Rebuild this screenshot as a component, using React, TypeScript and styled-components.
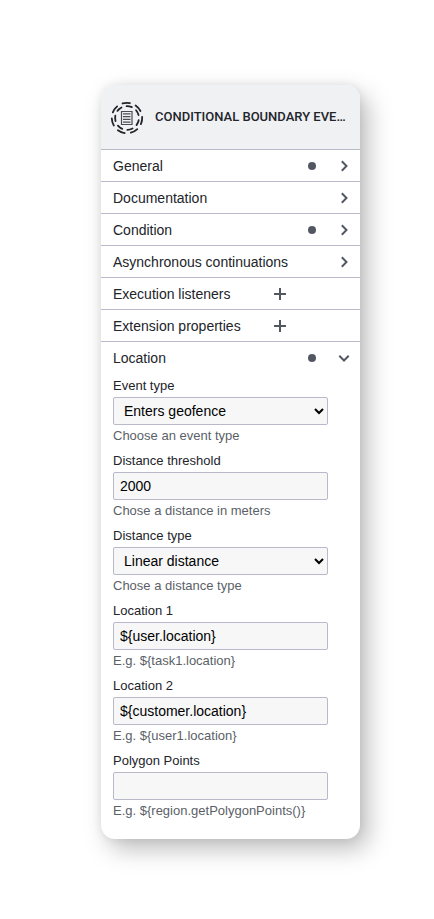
import React, { useId, useState } from "react";
import styled, { createGlobalStyle } from "styled-components";

const GlobalStyle = createGlobalStyle`
  *, *::before, *::after { box-sizing: border-box; }
  body {
    margin: 0;
    background: #ffffff;
    color: #22242a;
    font-family: "Liberation Sans", Arial, sans-serif;
    font-size: 14px;
  }
`;

const Page = styled.main`
  padding: 85px 74px 80px 101px;
`;

const Panel = styled.section`
  border-radius: 14px;
  background: #ffffff;
  box-shadow: 8px 10px 24px rgba(0, 0, 0, 0.26), 0 0 10px rgba(0, 0, 0, 0.08);
`;

const Header = styled.header`
  display: flex;
  align-items: center;
  gap: 11px;
  height: 65px;
  padding: 0 9px;
  border-bottom: 1px solid #b9bac9;
  border-radius: 14px 14px 0 0;
  background: #f0f1f3;
`;

const Title = styled.h1`
  flex: 1;
  min-width: 0;
  margin: 0;
  overflow: hidden;
  white-space: nowrap;
  text-overflow: ellipsis;
  font-family: Roboto, sans-serif;
  font-size: 13px;
  font-weight: 500;
  line-height: 20px;
`;

const GroupHeader = styled.button<{ $open?: boolean }>`
  display: flex;
  align-items: center;
  width: 100%;
  height: 32px;
  padding: 0 8px 0 12px;
  border: 0;
  border-bottom: ${(p) => (p.$open ? "0" : "1px solid #b9bac9")};
  background: transparent;
  color: inherit;
  font: inherit;
  text-align: left;
  cursor: pointer;
`;

const GroupTitle = styled.span`
  flex: 1;
  white-space: nowrap;
`;

const Dot = styled.span`
  width: 8px;
  height: 8px;
  margin-right: 20px;
  border-radius: 50%;
  background: #525762;
`;

const Icon = styled.svg<{ $push?: boolean }>`
  flex: none;
  width: 16px;
  height: 16px;
  margin-right: ${(p) => (p.$push ? "64px" : "0")};
  fill: none;
  stroke: #525762;
  stroke-width: 2;
`;

const Fields = styled.div`
  padding: 2px 32px 13px 12px;
`;

const Field = styled.div`
  display: flex;
  flex-direction: column;
  height: 75px;
  font-size: 13px;
`;

const Label = styled.label`
  line-height: 20px;
  margin-bottom: 1px;
`;

const Control = styled.input`
  width: 100%;
  height: 28px;
  margin-bottom: 1px;
  padding: 3px 6px;
  border: 1px solid #b9bac9;
  border-radius: 2px;
  background: #f7f7f8;
  color: #000000;
  font: inherit;
  font-size: 14px;
`;

const Hint = styled.span`
  color: #5b5f68;
  line-height: 20px;
  white-space: nowrap;
`;

const polar = (radius: number, degrees: number) => {
  const a = (degrees * Math.PI) / 180;
  return `${(17 + radius * Math.cos(a)).toFixed(2)} ${(19 + radius * Math.sin(a)).toFixed(2)}`;
};

const dash = (radius: number, middle: number, spread: number) =>
  `M${polar(radius, middle - spread)}A${radius} ${radius} 0 0 1 ${polar(radius, middle + spread)}`;

const ConditionalEventIcon = () => (
  <svg width="34" height="36" viewBox="0 0 34 36" fill="none" stroke="#22242a" aria-hidden="true">
    {Array.from({ length: 7 }, (_, i) => (
      <g key={i} strokeWidth="1.8" strokeLinecap="round">
        <path d={dash(15.2, -93 + (i * 360) / 7, 14)} />
        <path d={dash(11.9, -79 + (i * 360) / 7, 13)} />
      </g>
    ))}
    <path d="M11.5 12.5h10.5v13h-10.5z" stroke="#4a4c52" strokeWidth="1.2" />
    <path d="M13 14.8h7.5M13 17.6h7.5M13 20.4h7.5M13 23.2h7.5" stroke="#4a4c52" strokeWidth="1.2" />
  </svg>
);

type GroupProps = { title: string; filled?: boolean; list?: boolean; open?: boolean; onClick?: () => void };

const Group = ({ title, filled, list, open, onClick }: GroupProps) => (
  <GroupHeader type="button" $open={open} aria-expanded={list ? undefined : !!open} onClick={onClick}>
    <GroupTitle>{title}</GroupTitle>
    {filled && <Dot />}
    <Icon viewBox="0 0 16 16" $push={list} aria-hidden="true">
      <path d={list ? "M8 2v12M2 8h12" : open ? "M3.3 5.8L8 10.5l4.7-4.7" : "M5.8 3.3L10.5 8l-4.7 4.7"} />
    </Icon>
  </GroupHeader>
);

type EntryProps = { label: string; hint: string; value: string; options?: string[] };

const Entry = ({ label, hint, value, options }: EntryProps) => {
  const id = useId();
  return (
    <Field>
      <Label htmlFor={id}>{label}</Label>
      {options ? (
        <Control as="select" id={id} defaultValue={value} aria-describedby={`${id}-hint`}>
          {options.map((o) => (
            <option key={o}>{o}</option>
          ))}
        </Control>
      ) : (
        <Control type="text" id={id} defaultValue={value} aria-describedby={`${id}-hint`} />
      )}
      <Hint id={`${id}-hint`}>{hint}</Hint>
    </Field>
  );
};

const groups: GroupProps[] = [
  { title: "General", filled: true },
  { title: "Documentation" },
  { title: "Condition", filled: true },
  { title: "Asynchronous continuations" },
  { title: "Execution listeners", list: true },
  { title: "Extension properties", list: true },
];

const entries: EntryProps[] = [
  { label: "Event type", value: "Enters geofence", hint: "Choose an event type", options: ["Enters geofence"] },
  { label: "Distance threshold", value: "2000", hint: "Chose a distance in meters" },
  { label: "Distance type", value: "Linear distance", hint: "Chose a distance type", options: ["Linear distance"] },
  { label: "Location 1", value: "${user.location}", hint: "E.g. ${task1.location}" },
  { label: "Location 2", value: "${customer.location}", hint: "E.g. ${user1.location}" },
  { label: "Polygon Points", value: "", hint: "E.g. ${region.getPolygonPoints()}" },
];

export default function App() {
  const [open, setOpen] = useState(true);
  return (
    <Page>
      <GlobalStyle />
      <Panel>
        <Header>
          <ConditionalEventIcon />
          <Title>CONDITIONAL BOUNDARY EVENT</Title>
        </Header>
        {groups.map((g) => (
          <Group key={g.title} {...g} />
        ))}
        <Group title="Location" filled open={open} onClick={() => setOpen(!open)} />
        {open && (
          <Fields>
            {entries.map((e) => (
              <Entry key={e.label} {...e} />
            ))}
          </Fields>
        )}
      </Panel>
    </Page>
  );
}
